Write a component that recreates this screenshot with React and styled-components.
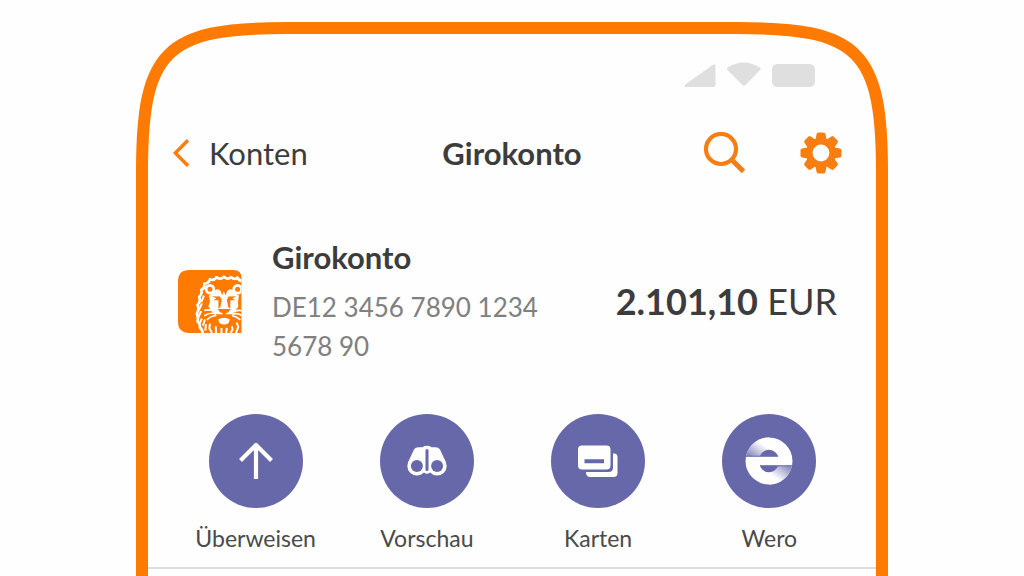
import React from "react";
import styled, { createGlobalStyle } from "styled-components";

const orange = "#ff7a00";
const iconOrange = "#f87e12";
const violet = "#6768a9";
const ink = "#3c3c3c";

const GlobalStyle = createGlobalStyle`
  *, *::before, *::after { box-sizing: border-box; }
  body {
    margin: 0;
    background: #fefefe;
    color: ${ink};
    font-family: Lato, "Noto Sans", sans-serif;
    overflow-x: hidden;
  }
`;

const Page = styled.div`
  display: flex;
  justify-content: center;
  min-height: 100vh;
  padding: 22px 136px 0;
`;

const Phone = styled.main`
  position: relative;
  flex: 1;
  padding: 0 12px;
`;

const Bezel = styled.div`
  position: absolute;
  inset: 0;
  pointer-events: none;
  display: grid;
  grid-template-columns: 152px 1fr 152px;
  grid-template-rows: 152px 1fr;
`;

const Corner = styled.svg`
  display: block;
  width: 152px;
  height: 152px;
  transform: ${(p) => (p.$right ? "scaleX(-1)" : "none")};
`;

const TopEdge = styled.div`
  border-top: 12px solid ${orange};
`;

const SideEdges = styled.div`
  grid-column: 1 / -1;
  border: solid ${orange};
  border-width: 0 12px;
`;

const StatusBar = styled.div`
  display: flex;
  justify-content: flex-end;
  align-items: center;
  padding: 40px 61px 0 0;
  height: 66px;
`;

const Header = styled.header`
  display: grid;
  grid-template-columns: 1fr auto 1fr;
  align-items: center;
  height: 64px;
  margin: 33px 0 50px;
  padding: 0 24px;
`;

const BackLink = styled.a`
  display: flex;
  align-items: center;
  gap: 19px;
  color: ${ink};
  font-size: 31px;
  line-height: 40px;
  text-decoration: none;
`;

const Title = styled.h1`
  margin: 0;
  font-size: 31px;
  line-height: 40px;
  font-weight: 700;
`;

const Tools = styled.div`
  display: flex;
  justify-content: flex-end;
  gap: 54px;
  padding-right: 10px;
`;

const IconButton = styled.button`
  display: block;
  padding: 0;
  border: 0;
  background: none;
  cursor: pointer;

  svg { display: block; }
`;

const Account = styled.section`
  display: flex;
  align-items: center;
  padding: 0 39px 0 30px;
  height: 132px;
`;

const AccountText = styled.div`
  flex: 1;
  margin-left: 30px;
`;

const AccountName = styled.h2`
  margin: 0 0 11px;
  font-size: 31px;
  line-height: 40px;
  font-weight: 700;
`;

const Iban = styled.p`
  margin: 0;
  max-width: 290px;
  color: #808080;
  font-size: 26px;
  line-height: 39px;
`;

const Amount = styled.p`
  margin: 0;
  font-size: 36px;
  line-height: 48px;
  white-space: nowrap;
`;

const Actions = styled.nav`
  display: grid;
  grid-template-columns: repeat(4, 1fr);
  padding: 47px 21px 13px 22px;
  border-bottom: 2px solid #dedede;
`;

const Action = styled.button`
  display: flex;
  flex-direction: column;
  align-items: center;
  gap: 14px;
  padding: 0;
  border: 0;
  background: none;
  color: #4a4a4a;
  font: inherit;
  font-size: 23px;
  line-height: 32px;
  cursor: pointer;
`;

const Disc = styled.span`
  display: grid;
  place-items: center;
  width: 94px;
  height: 94px;
  border-radius: 50%;
  background: ${violet};
`;

function CornerArc({ right }) {
  return (
    <Corner $right={right} viewBox="0 0 152 152" aria-hidden="true">
      <path d="M6 152V150C6 29 29 6 150 6H152" fill="none" stroke={orange} strokeWidth="12" />
    </Corner>
  );
}

function StatusIcons() {
  return (
    <svg width="131" height="26" viewBox="0 0 131 26" fill="#dfdfdf" aria-hidden="true">
      <path d="M1.4 22.5 28.6 3Q31.5 1 31.5 4.5V23Q31.5 25 29.5 25H2Q-.8 25 1.4 22.5Z" />
      <path d="M43.5 8Q42 6.6 44 5.3Q59.5-4.5 75.5 5.3Q77.5 6.6 76 8L61.5 23Q60 24.6 58.4 23Z" />
      <rect x="88" y="2" width="43" height="23" rx="5.5" />
    </svg>
  );
}

function Chevron() {
  return (
    <svg width="18" height="28" viewBox="0 0 18 28" fill="none" stroke={iconOrange} strokeWidth="3.4" aria-hidden="true">
      <path d="M16 1.2 3.3 14 16 26.8" />
    </svg>
  );
}

function SearchIcon() {
  return (
    <svg width="42" height="42" viewBox="0 0 42 42" fill="none" stroke={iconOrange} aria-hidden="true">
      <circle cx="17" cy="17" r="15" strokeWidth="4.2" />
      <path d="M27.5 27.5 39.5 39.5" strokeWidth="5" />
    </svg>
  );
}

function GearIcon() {
  return (
    <svg width="42" height="42" viewBox="-21 -21 42 42" aria-hidden="true">
      <g fill={iconOrange}>
        {[0, 45, 90, 135, 180, 225, 270, 315].map((angle) => (
          <path
            key={angle}
            transform={`rotate(${angle})`}
            d="M-5.6-13-4.4-19Q-4-20.500-2.500-20.500H2.500Q4-20.500 4.400-19L5.600-13Z"
          />
        ))}
      </g>
      <circle r="11.700" fill="none" stroke={iconOrange} strokeWidth="6.600" />
    </svg>
  );
}

function LionLogo() {
  return (
    <svg width="64" height="63" viewBox="24 29 190 187" role="img" aria-label="ING">
      <defs>
        <clipPath id="tile">
          <path d="M58 29H188Q213 29 213 54V216H58Q24 216 24 182V63Q24 29 58 29Z" />
        </clipPath>
      </defs>
      <g clipPath="url(#tile)">
        <rect x="24" y="29" width="190" height="187" fill={orange} />
        <g fill="none" stroke="#fff" strokeWidth="8" strokeLinejoin="round">
          <path d="M214 62Q204 60 200 51 194 60 181 50 173 60 160 49 151 60 138 50 132 62 119 56 115 70 102 69 105 84 93 88 97 101 87 109 92 123 82 133 88 146 80 158 85 171 82 182 91 190 89 200 97 206 97 216" />
          <path d="M101 105 93 124M95 128 86 148M93 151 84 170M95 173 88 188M104 176 98 194M107 190 105 209" strokeWidth="6" />
          <path d="M119 188 117 202 125 216M136 196 137 216M153 201V216M169 201 167 216M184 196 186 206 180 216M198 185 203 198 196 216" strokeWidth="6" />
        </g>
        <g fill="none" stroke="#fff" strokeWidth="8">
          <circle cx="119" cy="86" r="11.5" />
          <circle cx="201" cy="86" r="11.5" />
        </g>
        <path
          fill="#fff"
          d="M116 104Q122 103 132 91 141 82 151 91L155 105 160 91 165 105 170 91Q181 82 190 91 199 103 205 105L202 124 203 138 193 151 184 160H131L121 148 114 136 119 124Z"
        />
        <g fill={orange}>
          <path d="M125 107 149 108 154 118 150 139 144 143 144 119 130 119 138 113Z" />
          <path d="M197 107 174 108 169 118 173 139 179 143 180 119 193 119 186 113Z" />
          <path d="M142 145H181L174 154 165 158V163L177 168 192 161 186 170 176 175 161 169 146 175 134 170 129 161 145 168 157 163V158L148 154Z" />
        </g>
        <g fill="none" stroke="#fff" strokeWidth="5">
          <path d="M102 149Q120 144 138 155M102 165Q120 153 137 160M110 177Q119 166 138 164M214 150Q200 146 184 155M214 165Q203 156 185 160M209 177Q200 168 184 164" />
        </g>
        <path fill="#fff" d="M143 176Q161 165 178 176L174 187Q161 194 148 187Z" />
      </g>
    </svg>
  );
}

function ArrowUp() {
  return (
    <svg width="36" height="38" viewBox="0 0 36 38" fill="none" stroke="#fff" strokeWidth="4.2" aria-hidden="true">
      <path d="M18 37V4M2.5 18.5 18 3 33.5 18.5" strokeLinejoin="round" />
    </svg>
  );
}

function Binoculars() {
  return (
    <svg width="40" height="32" viewBox="0 0 40 32" aria-hidden="true">
      <g fill="#fff">
        <path d="M1.2 17 7 4.5Q8.5 2.2 11.5 2.2H15.500Q17 .8 20 .8T24.500 2.2H28.5Q31.5 2.2 33 4.5L38.8 17 30 21 23.600 26.5Q22.500 28.8 20 28.8T16.400 26.5L10 21Z" />
        <circle cx="9.9" cy="21" r="9.600" />
        <circle cx="30.1" cy="21" r="9.600" />
      </g>
      <g fill={violet}>
        <circle cx="9.9" cy="21" r="6" />
        <circle cx="30.1" cy="21" r="6" />
        <rect x="18.500" y="4" width="3" height="22" rx="1.500" />
      </g>
    </svg>
  );
}

function Cards() {
  return (
    <svg width="40" height="32" viewBox="0 0 40 32" aria-hidden="true">
      <path fill="#fff" d="M35 8.5H36Q39.5 8.5 39.5 12V28Q39.5 32 35.5 32H12Q8.5 32 8 28V27H30.5Q35 27 35 22.5Z" />
      <path fill="#fff" fillRule="evenodd" d="M4 .5H28.5Q32.5 .5 32.5 4.5V20.5Q32.5 24.5 28.5 24.5H4Q0 24.5 0 20.5V4.5Q0 .5 4 .5ZM6.5 14.3V18.300H26V14.3Z" />
    </svg>
  );
}

function WeroMark() {
  return (
    <svg width="48" height="48" viewBox="-24 -24 48 48" aria-hidden="true">
      <defs>
        <linearGradient id="weroTop" gradientUnits="userSpaceOnUse" x1="-18" y1="-4" x2="-8" y2="-18">
          <stop offset="0" stopColor="#8a8bbe" />
          <stop offset="1" stopColor="#fff" />
        </linearGradient>
        <linearGradient id="weroBottom" gradientUnits="userSpaceOnUse" x1="18" y1="4" x2="8" y2="18">
          <stop offset="0" stopColor="#8a8bbe" />
          <stop offset="1" stopColor="#fff" />
        </linearGradient>
      </defs>
      <circle r="23.5" fill="#fff" />
      <path fill="url(#weroTop)" d="M-23-4.8A23.5 23.5 0 0 1 0-23.5V-11.5Q-6-11.5-9-4.8Z" />
      <path fill="url(#weroBottom)" d="M23 4.8A23.5 23.5 0 0 1 0 23.5V11.5Q6 11.5 9 4.8Z" />
      <g fill={violet}>
        <path d="M-9.3-4.8Q-6-11.3 0-11.3T9.3-4.8Z" />
        <path d="M-9.3 4.8Q-6 11.3 0 11.3T9.3 4.8Z" />
        <path d="M-24-5.2H9V-4.2H-24ZM24 5.2H-9V4.2H24Z" />
      </g>
    </svg>
  );
}

const actions = [
  { label: "Überweisen", Icon: ArrowUp },
  { label: "Vorschau", Icon: Binoculars },
  { label: "Karten", Icon: Cards },
  { label: "Wero", Icon: WeroMark },
];

export default function App() {
  return (
    <>
      <GlobalStyle />
      <Page>
        <Phone>
          <Bezel>
            <CornerArc />
            <TopEdge />
            <CornerArc right />
            <SideEdges />
          </Bezel>
          <StatusBar>
            <StatusIcons />
          </StatusBar>
          <Header>
            <BackLink href="#konten">
              <Chevron />
              Konten
            </BackLink>
            <Title>Girokonto</Title>
            <Tools>
              <IconButton type="button" aria-label="Suche">
                <SearchIcon />
              </IconButton>
              <IconButton type="button" aria-label="Einstellungen">
                <GearIcon />
              </IconButton>
            </Tools>
          </Header>
          <Account>
            <LionLogo />
            <AccountText>
              <AccountName>Girokonto</AccountName>
              <Iban>DE12 3456 7890 1234 5678 90</Iban>
            </AccountText>
            <Amount>
              <strong>2.101,10</strong> EUR
            </Amount>
          </Account>
          <Actions>
            {actions.map(({ label, Icon }) => (
              <Action key={label} type="button">
                <Disc>
                  <Icon />
                </Disc>
                {label}
              </Action>
            ))}
          </Actions>
        </Phone>
      </Page>
    </>
  );
}
